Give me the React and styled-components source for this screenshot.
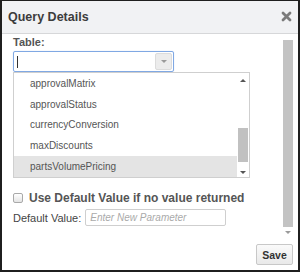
import React from "react";
import styled, { createGlobalStyle } from "styled-components";

const GlobalStyle = createGlobalStyle`
  html, body {
    margin: 0;
    padding: 0;
    background: #ffffff;
  }
  * {
    box-sizing: border-box;
  }
`;

const Dialog = styled.div`
  display: flex;
  flex-direction: column;
  width: 300px;
  height: 272px;
  background: #ffffff;
  border: 2px solid #1f1f1f;
  border-top-width: 1px;
  font-family: "Liberation Sans", Arial, sans-serif;
  color: #555;
`;

const Header = styled.div`
  display: flex;
  align-items: center;
  justify-content: space-between;
  height: 33px;
  padding: 0 6px 1px 6px;
  background: #f1f2f4;
  border-bottom: 1px solid #d6d7d9;
`;

const Title = styled.h1`
  margin: 0;
  font-size: 12.5px;
  font-weight: bold;
  color: #3c3c3c;
`;

const Close = styled.button`
  display: flex;
  padding: 0;
  border: none;
  background: none;
  cursor: pointer;
`;

const Body = styled.div`
  display: flex;
  height: 204px;
`;

const Content = styled.div`
  flex: 1;
  padding: 2px 0 0 11px;
`;

const Label = styled.div`
  font-size: 11px;
  line-height: 13px;
  font-weight: bold;
  color: #555;
  margin-bottom: 2px;
`;

const Combo = styled.div`
  display: flex;
  align-items: center;
  justify-content: space-between;
  width: 161px;
  height: 21px;
  padding: 0 1px 0 3px;
  border: 1px solid #80a8e3;
  border-radius: 2px;
  box-shadow: 0 0 1px rgba(90, 140, 220, 0.4);
`;

const Caret = styled.span`
  width: 1px;
  height: 12px;
  background: #333;
`;

const ComboButton = styled.span`
  display: flex;
  align-items: center;
  justify-content: center;
  width: 17px;
  height: 17px;
  background: #ececec;
  border: 1px solid #dcdcdc;
  border-radius: 2px;
`;

const List = styled.div`
  display: flex;
  width: 237px;
  height: 106px;
  border: 1px solid #cfcfcf;
  background: #fff;
`;

const Options = styled.div`
  flex: 1;
  display: flex;
  flex-direction: column;
`;

const Option = styled.div`
  flex: 1;
  display: flex;
  align-items: center;
  padding-left: 16px;
  font-size: 10px;
  color: #555;
  background: ${(p) => (p.$active ? "#e4e4e4" : "transparent")};
`;

const ListScroll = styled.div`
  display: flex;
  flex-direction: column;
  align-items: center;
  width: 12px;
  padding: 6px 1px 2px 1px;
`;

const ListThumb = styled.div`
  width: 10px;
  height: 34px;
  margin-top: 46px;
  background: #c1c1c1;
`;

const Arrow = styled.span`
  width: 0;
  height: 0;
  border-left: 3px solid transparent;
  border-right: 3px solid transparent;
  ${(p) =>
    p.$up
      ? "border-bottom: 3px solid #555;"
      : `border-top: 3px solid ${p.$light ? "#9a9a9a" : "#555"};`}
  margin-top: ${(p) => p.$gap || 0}px;
`;

const CheckRow = styled.label`
  display: flex;
  align-items: center;
  gap: 6px;
  margin-top: 13px;
  font-size: 12px;
  font-weight: bold;
  color: #555;
`;

const Checkbox = styled.span`
  width: 10px;
  height: 10px;
  border: 1px solid #a9a9a9;
  border-radius: 2px;
  background: linear-gradient(#ffffff, #e4e4e4);
`;

const FieldRow = styled.div`
  display: flex;
  align-items: center;
  gap: 4px;
  margin-top: 4px;
  font-size: 11px;
  color: #444;
`;

const TextInput = styled.input`
  width: 141px;
  height: 17px;
  padding: 0 4px;
  border: 1px solid #cfcfcf;
  border-radius: 2px;
  font-family: "Liberation Sans", Arial, sans-serif;
  font-size: 10px;
  outline: none;

  &::placeholder {
    color: #aaa;
    font-style: italic;
  }
`;

const Scroll = styled.div`
  display: flex;
  flex-direction: column;
  align-items: center;
  width: 12px;
  margin-right: 4px;
  padding-top: 6px;
`;

const Thumb = styled.div`
  width: 10px;
  height: 187px;
  background: #c3c3c3;
`;

const Footer = styled.div`
  display: flex;
  justify-content: flex-end;
  align-items: flex-end;
  flex: 1;
  padding: 0 5px 5px 0;
`;

const SaveButton = styled.button`
  width: 37px;
  height: 21px;
  padding: 0;
  border: 1px solid #c8c8c8;
  border-radius: 2px;
  background: linear-gradient(#fafafa, #e9e9e9);
  font-family: "Liberation Sans", Arial, sans-serif;
  font-size: 10.5px;
  font-weight: bold;
  color: #333;
  cursor: pointer;
`;

const tables = [
  "approvalMatrix",
  "approvalStatus",
  "currencyConversion",
  "maxDiscounts",
  "partsVolumePricing",
];

const App = () => {
  return (
    <>
      <GlobalStyle />
      <Dialog>
        <Header>
          <Title>Query Details</Title>
          <Close aria-label="Close">
            <svg width="11" height="11" viewBox="0 0 11 11">
              <path
                d="M2 2 L9 9 M9 2 L2 9"
                stroke="#7b7b7b"
                strokeWidth="2.8"
                strokeLinecap="round"
              />
            </svg>
          </Close>
        </Header>
        <Body>
          <Content>
            <Label>Table:</Label>
            <Combo>
              <Caret />
              <ComboButton>
                <Arrow $light />
              </ComboButton>
            </Combo>
            <List>
              <Options>
                {tables.map((t, i) => (
                  <Option key={t} $active={i === tables.length - 1}>
                    {t}
                  </Option>
                ))}
              </Options>
              <ListScroll>
                <Arrow $up />
                <ListThumb />
                <Arrow $gap={9} />
              </ListScroll>
            </List>
            <CheckRow>
              <Checkbox />
              Use Default Value if no value returned
            </CheckRow>
            <FieldRow>
              Default Value:
              <TextInput placeholder="Enter New Parameter" />
            </FieldRow>
          </Content>
          <Scroll>
            <Thumb />
            <Arrow $light $gap={4} />
          </Scroll>
        </Body>
        <Footer>
          <SaveButton>Save</SaveButton>
        </Footer>
      </Dialog>
    </>
  );
};

export default App;
